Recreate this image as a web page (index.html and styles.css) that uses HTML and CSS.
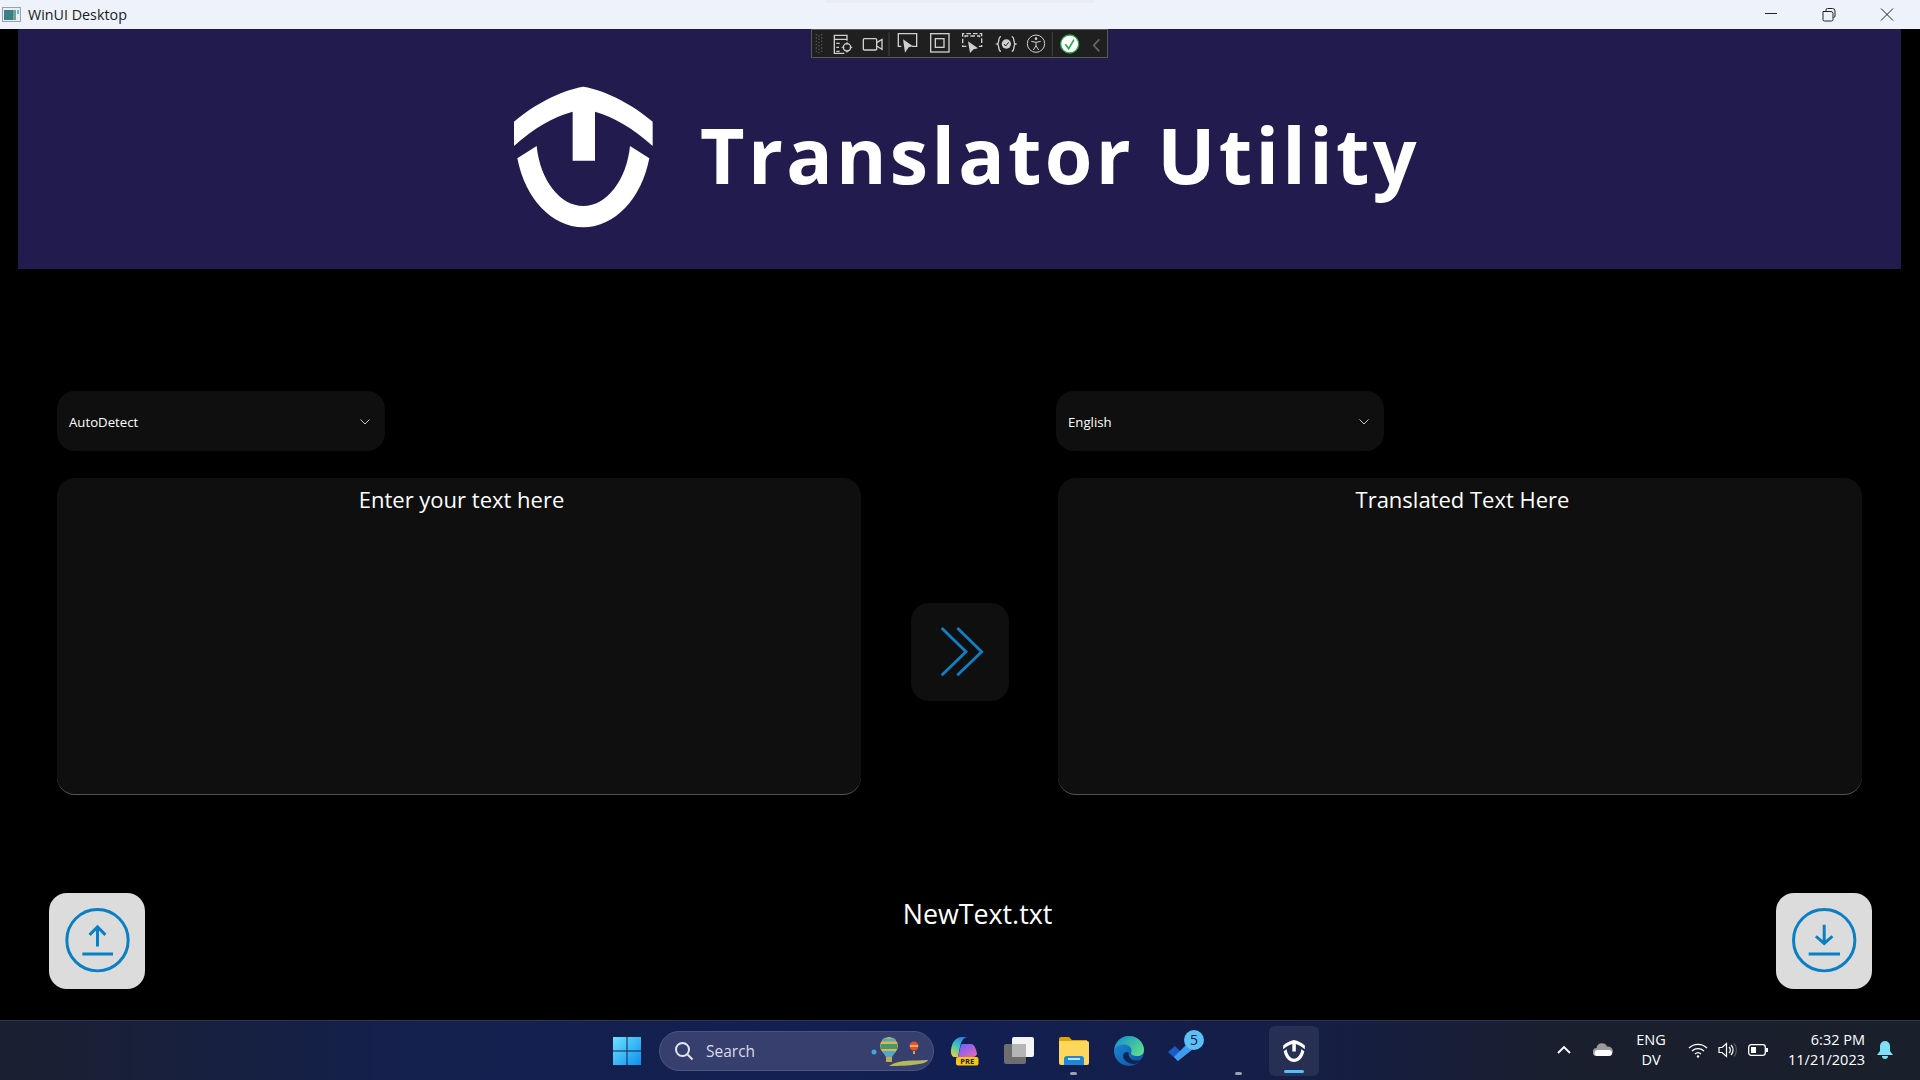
FILE: index.html
```html
<!DOCTYPE html>
<html lang="en">
<head>
  <meta charset="UTF-8">
  <title>WinUI Desktop</title>
  <link rel="stylesheet" href="styles.css">
</head>
<body>

  <div class="titlebar">
    <svg class="app-icon" width="20" height="16" viewBox="0 0 20 16">
      <rect x="0.5" y="0.5" width="18" height="14" fill="#e8eef2" stroke="#9aa0a6"/>
      <rect x="2" y="3" width="9" height="10" fill="#3d7f86"/>
      <rect x="11" y="3" width="3" height="10" fill="#6fa78c"/>
      <rect x="15" y="3" width="2" height="4" fill="#63b9d8"/>
    </svg>
    <span class="title-text">WinUI Desktop</span>
    <div class="window-buttons">
      <svg width="58" height="29" viewBox="0 0 58 29"><path d="M25 13.5h12" stroke="#222" fill="none"/></svg>
      <svg width="58" height="29" viewBox="0 0 58 29"><path d="M25 11.5h8a2 2 0 0 1 2 2v6a1.5 1.5 0 0 1-1.5 1.5h-7a1.5 1.5 0 0 1-1.5-1.5zM28 11.5v-1.5a1.5 1.5 0 0 1 1.5-1.5h5a2.5 2.5 0 0 1 2.5 2.5v5a1.5 1.5 0 0 1-1.5 1.5" stroke="#222" fill="none"/></svg>
      <svg width="58" height="29" viewBox="0 0 58 29"><path d="M25 8.5l12 12M37 8.5l-12 12" stroke="#222" fill="none"/></svg>
    </div>
  </div>
  <div class="titlebar-shadow"></div>

  <!-- debug toolbar, drawn at 3x of its size -->
  <div class="debug-bar">
    <svg width="297" height="29" viewBox="64 87 891 87" fill="none" stroke="#cfcfcf" stroke-width="4">
      <path d="M80 102v60M88 106v60M96 102v60" stroke="#555" stroke-width="4" stroke-dasharray="4 6"/>
      <path d="M172 122v-16h-38v54h30M134 118h38M140 130h10M140 142h8M140 154h10"/>
      <circle cx="172" cy="142" r="11"/>
      <path d="M172 126v8M172 150v8M156 142h8M180 142h8" stroke-width="3"/>
      <rect x="221" y="116" width="40" height="34" rx="3"/>
      <path d="M261 128l16-10v30l-16-10"/>
      <path d="M298 97v72M788 97v72" stroke="#444" stroke-width="3"/>
      <path d="M335 139h-9v-38h55v38h-14"/>
      <path d="M340 118l30 21-13 3-11 16z" fill="#cfcfcf" stroke="none"/>
      <rect x="423" y="101" width="55" height="55"/>
      <rect x="437" y="116" width="26" height="26"/>
      <path d="M530 139h-11v-38h57v38h-8M526 112v-4h44v4" stroke-dasharray="14 6"/>
      <path d="M535 124l30 21-13 3-11 11z" fill="#cfcfcf" stroke="none"/>
      <path d="M634 110c-10 0-4 20-11 22 7 2 1 22 11 22M666 110c10 0 4 20 11 22-7 2-1 22-11 22"/>
      <circle cx="650" cy="132" r="14" fill="#cfcfcf" stroke="none"/>
      <path d="M643 132l5 6 9-11" stroke="#1f1f1f" stroke-width="3"/>
      <circle cx="739" cy="131" r="26" stroke-width="3"/>
      <circle cx="739" cy="116" r="4" fill="#cfcfcf" stroke="none"/>
      <path d="M725 124l14 3 14-3M739 127v10l-8 13M739 137l8 13" stroke-width="3"/>
      <circle cx="840" cy="132" r="27" fill="#fff" stroke="#2aa84a" stroke-width="4"/>
      <path d="M827 133l10 13 16-27" stroke="#2aa84a" stroke-width="5"/>
      <path d="M929 118l-17 18 17 18" stroke="#666" stroke-width="5"/>
    </svg>
  </div>

  <main class="content">
    <header class="banner">
      <svg class="logo" width="190" height="170" viewBox="0 0 570 510">
        <path fill="#fff" d="M72 155C130 105 210 62 280 50C350 62 430 105 488 155V228C430 175 370 140 315 125V272H248V125C190 140 130 175 72 228Z"/>
        <path fill="#fff" d="M82 265L140 228C150 330 210 408 280 408C350 408 410 330 420 228L478 265C455 385 375 472 280 472C185 472 105 385 82 265Z"/>
      </svg>
      <span class="banner-title">Translator Utility</span>
    </header>

    <section class="translate-grid">
      <div class="dropdown">
        <span>AutoDetect</span>
        <svg width="10" height="6" viewBox="0 0 10 6"><path d="M0.5 0.5L5 5L9.5 0.5" stroke="#c8c8c8" fill="none"/></svg>
      </div>
      <div></div>
      <div class="dropdown dropdown-right">
        <span>English</span>
        <svg width="10" height="6" viewBox="0 0 10 6"><path d="M0.5 0.5L5 5L9.5 0.5" stroke="#c8c8c8" fill="none"/></svg>
      </div>

      <div class="text-box">Enter your text here</div>
      <button class="icon-btn go-btn" type="button">
        <svg width="98" height="98" viewBox="0 0 98 98" fill="none" stroke="#0f7fc6" stroke-width="2.8">
          <path d="M30.7 25L55 48.7L30.7 72.3M46.3 25L70.7 48.7L46.3 72.3"/>
        </svg>
      </button>
      <div class="text-box">Translated Text Here</div>
    </section>

    <footer class="file-row">
      <button class="icon-btn file-btn" type="button">
        <svg width="96" height="96" viewBox="0 0 97 97" fill="none" stroke="#0a7fc4" stroke-width="3">
          <circle cx="49" cy="47.7" r="31"/>
          <path d="M49 54V34.3M41 42.3L49 34.3L57 42.3M33.7 61.7H64.7"/>
        </svg>
      </button>
      <div class="file-name">NewText.txt</div>
      <button class="icon-btn file-btn" type="button">
        <svg width="96" height="96" viewBox="0 0 97 97" fill="none" stroke="#0a7fc4" stroke-width="3">
          <circle cx="48.7" cy="47.7" r="31"/>
          <path d="M48.7 32V51M40.3 43.7L48.7 51L57 43.7M33 61.7H64.7"/>
        </svg>
      </button>
    </footer>
  </main>

  <div class="taskbar">
    <div class="task-cell">
      <svg width="30" height="30" viewBox="0 0 30 30">
        <defs><linearGradient id="winGrad" x1="0" y1="0" x2="1" y2="1"><stop offset="0" stop-color="#6fe3fb"/><stop offset="1" stop-color="#0a8fef"/></linearGradient></defs>
        <path fill="url(#winGrad)" d="M1 1h13.5v13.5H1zM15.5 1H29v13.5H15.5zM1 15.5h13.5V29H1zM15.5 15.5H29V29H15.5z"/>
      </svg>
    </div>

    <div class="search-pill">
      <svg width="20" height="20" viewBox="0 0 20 20" fill="none" stroke="#e4e6f0" stroke-width="2">
        <circle cx="8.5" cy="8.5" r="6.5"/>
        <path d="M13.5 13.5L18.5 18.5"/>
      </svg>
      <span>Search</span>
      <svg class="search-art" width="58" height="32" viewBox="0 0 58 32">
        <path d="M18 31C28 24 44 26 57 25C56 29 40 31 18 31Z" fill="#b5b95a"/>
        <circle cx="18" cy="11" r="9" fill="#e5b53d"/>
        <path d="M9.5 9h17v5h-17z" fill="#3f9a78"/>
        <path d="M12 3.5h12l1 3h-14z" fill="#4fa9c8"/>
        <path d="M11 16h14l-4 6h-6z" fill="#4fa9c8"/>
        <rect x="15" y="22" width="6" height="5" fill="#c9a55a"/>
        <circle cx="43" cy="11" r="4.5" fill="#e0513a"/>
        <path d="M39 10h8v2h-8z" fill="#e5b53d"/>
        <rect x="42" y="16" width="2" height="3" fill="#c9a55a"/>
        <circle cx="3" cy="17" r="2.5" fill="#4aa3d8"/>
      </svg>
    </div>

    <div class="task-cell">
      <svg width="30" height="30" viewBox="0 0 30 30">
        <defs>
          <linearGradient id="copLeft" x1="0.7" y1="0" x2="0.2" y2="1"><stop offset="0" stop-color="#2f7fe8"/><stop offset="0.5" stop-color="#3fc6b8"/><stop offset="1" stop-color="#e8d23f"/></linearGradient>
          <linearGradient id="copRight" x1="0" y1="0" x2="1" y2="1"><stop offset="0" stop-color="#5a6cf0"/><stop offset="0.5" stop-color="#a860e0"/><stop offset="1" stop-color="#f06ab0"/></linearGradient>
        </defs>
        <path fill="url(#copLeft)" d="M2 14C3 6 7 1 13 1H18C14 2 12 6 11 11L9 21H5C3 21 1.5 17 2 14Z"/>
        <path fill="url(#copRight)" d="M13 8H22C25 8 27 12 28 18C27 20 26 21 24 21H9L11 13C11.5 10 12 8 13 8Z"/>
        <rect x="7" y="21" width="22.5" height="8.5" rx="2" fill="#f5c518"/>
        <text x="18.2" y="28" class="pre-text">PRE</text>
      </svg>
    </div>

    <div class="task-cell">
      <svg width="32" height="30" viewBox="0 0 32 30">
        <rect x="1" y="8" width="22" height="20" rx="2" fill="#6e6e6e"/>
        <rect x="9" y="1" width="22" height="20" rx="2" fill="#f4f4f4"/>
        <rect x="9" y="8" width="14" height="13" fill="#b5b5b5"/>
      </svg>
    </div>

    <div class="task-cell with-dot">
      <svg width="30" height="28" viewBox="0 0 30 28">
        <path d="M0 2a2 2 0 0 1 2-2h8l3 3h15v6H0z" fill="#e0a300"/>
        <path d="M0 4h28a2 2 0 0 1 2 2v20a2 2 0 0 1-2 2H2a2 2 0 0 1-2-2z" fill="#ffd65c"/>
        <path d="M5 28v-6a3 3 0 0 1 3-3h14a3 3 0 0 1 3 3v6z" fill="#1f87d6"/>
        <path d="M9 22h12" stroke="#bfe3ff" stroke-width="2"/>
      </svg>
    </div>

    <div class="task-cell">
      <svg width="30" height="30" viewBox="0 0 30 30">
        <defs>
          <linearGradient id="edgeTop" x1="0" y1="0" x2="1" y2="0.8"><stop offset="0" stop-color="#0e8bd0"/><stop offset="1" stop-color="#5fe08a"/></linearGradient>
          <linearGradient id="edgeLow" x1="0" y1="0" x2="1" y2="1"><stop offset="0" stop-color="#1c8fd8"/><stop offset="1" stop-color="#0d4ea0"/></linearGradient>
        </defs>
        <circle cx="15" cy="15" r="15" fill="url(#edgeLow)"/>
        <path d="M0.5 13C2 5 8 0 15 0c8 0 15 6 15 14 0 4-3 6-7 6-3 0-6-1-6-3 1-2 1-5-2-7-5-3-12-1-14.5 3z" fill="url(#edgeTop)"/>
        <path d="M13 16c-3 0-5 3-3 7 2 3 6 5 11 5 3-1 5-2 7-5-3 2-8 2-11 0-2-2-3-4-2-6z" fill="#12254f"/>
      </svg>
    </div>

    <div class="task-cell">
      <svg class="todo-icon" width="36" height="36" viewBox="0 0 36 36">
        <path d="M0 22l7-6 9 9-6 6z" fill="#1c5bc4"/>
        <path d="M10 31l-4-4L24 9l6 6z" fill="#3f9bef"/>
        <circle cx="26" cy="10" r="10" fill="#5cc0f5"/>
        <text x="26" y="15" class="badge-text">5</text>
      </svg>
    </div>

    <div class="task-cell with-dot"></div>

    <div class="task-cell">
      <div class="active-app">
        <svg width="24" height="22" viewBox="72 50 416 422">
          <path fill="#fff" d="M72 155C130 105 210 62 280 50C350 62 430 105 488 155V228C430 175 370 140 315 125V272H248V125C190 140 130 175 72 228Z"/>
          <path fill="#fff" d="M82 265L140 228C150 330 210 408 280 408C350 408 410 330 420 228L478 265C455 385 375 472 280 472C185 472 105 385 82 265Z"/>
        </svg>
        <span class="active-line"></span>
      </div>
    </div>

    <div class="tray">
      <svg class="tray-chevron" width="14" height="9" viewBox="0 0 14 9"><path d="M1 8L7 2L13 8" stroke="#fff" stroke-width="1.8" fill="none"/></svg>
      <svg class="tray-cloud" width="20" height="13" viewBox="0 0 20 13">
        <path d="M4 13a4 4 0 0 1-.5-8A5.5 5.5 0 0 1 14 3.5a4.5 4.5 0 0 1 2 9.500z" fill="#9a9a9a"/>
        <path d="M4 13a3 3 0 0 1 1-6h11a3 3 0 0 1 0 6z" fill="#fff"/>
      </svg>
      <div class="lang">ENG<br>DV</div>
      <svg class="tray-wifi" width="20" height="16" viewBox="0 0 20 16" fill="none" stroke="#fff" stroke-width="1.3">
        <path d="M1 6a13 13 0 0 1 18 0M4 9a9 9 0 0 1 12 0M7 12a4.5 4.5 0 0 1 6 0"/>
        <circle cx="10" cy="14.5" r="1.2" fill="#fff" stroke="none"/>
      </svg>
      <svg class="tray-sound" width="20" height="16" viewBox="0 0 20 16" fill="none" stroke="#fff" stroke-width="1.2">
        <path d="M1 5.5h3L8.5 1.5v13L4 10.5H1z"/>
        <path d="M11 5a4 4 0 0 1 0 6M13 3a7 7 0 0 1 0 10"/>
        <path d="M16 1.5a10 10 0 0 1 0 13" stroke="#555"/>
      </svg>
      <svg class="tray-battery" width="20" height="12" viewBox="0 0 20 12">
        <rect x="0.7" y="0.7" width="16.6" height="10.6" rx="2.5" fill="none" stroke="#fff" stroke-width="1.3"/>
        <rect x="3" y="3" width="5" height="6" fill="#fff"/>
        <rect x="18" y="4" width="2" height="4" fill="#fff"/>
      </svg>
      <div class="clock">6:32 PM<br>11/21/2023</div>
      <svg class="tray-bell" width="16" height="18" viewBox="0 0 16 18">
        <path d="M8 0a5 5 0 0 1 5 5v5l3 4H0l3-4V5a5 5 0 0 1 5-5z" fill="#7ee0f7"/>
        <path d="M5 15h6a3 3 0 0 1-6 0z" fill="#7ee0f7"/>
      </svg>
    </div>
  </div>

</body>
</html>
```

FILE: styles.css
```css
body {
  margin: 0;
  width: 1920px;
  height: 1080px;
  overflow: hidden;
  display: flex;
  flex-direction: column;
  position: relative;
  background-color: #000;
  font-family: "Open Sans", "Noto Sans", sans-serif;
  color: #fff;
}

/* title bar */
.titlebar {
  height: 29px;
  flex-shrink: 0;
  display: flex;
  align-items: center;
  background-color: #eef2fb;
  color: #1a1a1a;
}

.app-icon {
  margin-left: 2px;
}

.title-text {
  margin-left: 6px;
  font-size: 14.3px;
}

.window-buttons {
  margin-left: auto;
  margin-right: 6px;
  display: flex;
}

.titlebar-shadow {
  position: absolute;
  left: 825px;
  top: 0;
  width: 270px;
  height: 3px;
  background-color: #e9ecf5;
  border-radius: 0 0 12px 12px;
}

.debug-bar {
  position: absolute;
  left: 811px;
  top: 29px;
  width: 297px;
  height: 29px;
  background-color: #1f1f1f;
  box-shadow: inset 0 0 0 1px #5a5a5a;
}

/* main area */
.content {
  flex: 1;
  display: flex;
  flex-direction: column;
}

.banner {
  height: 240px;
  margin: 0 19px 0 18px;
  padding-left: 472px;
  display: flex;
  align-items: center;
  background-color: #221c4e;
}

.logo {
  margin-top: 11px;
}

.banner-title {
  margin-top: 10px;
  margin-left: 20px;
  font-size: 77px;
  font-weight: 700;
  letter-spacing: 3.3px;
  filter: blur(0.6px);
  white-space: nowrap;
}

.translate-grid {
  margin-top: 122px;
  padding-left: 57px;
  display: grid;
  grid-template-columns: 804px 197px 804px;
  grid-template-rows: 60px 317px;
  row-gap: 27px;
}

.dropdown {
  width: 328px;
  padding: 1px 15px 0 12px;
  box-sizing: border-box;
  display: flex;
  align-items: center;
  justify-content: space-between;
  background-color: #0f0f0f;
  border-radius: 18px;
  font-size: 13.2px;
}

.dropdown-right {
  margin-left: -2px;
}

.text-box {
  padding: 6px 0 0 5px;
  box-sizing: border-box;
  background-color: #0f0f0f;
  border-radius: 18px;
  border-bottom: 1px solid #555;
  text-align: center;
  font-size: 22px;
}

.icon-btn {
  padding: 0;
  border: 0;
  display: block;
}

.icon-btn svg {
  display: block;
}

.go-btn {
  width: 98px;
  height: 98px;
  margin: 125px 0 0 50px;
  background-color: #0f0f0f;
  border-radius: 18px;
}

.file-row {
  margin-top: 98px;
  padding: 0 48px 0 49px;
  display: flex;
}

.file-btn {
  width: 96px;
  height: 96px;
  background-color: #dcdcdc;
  border-radius: 18px;
}

.file-name {
  flex: 1;
  padding-left: 34px;
  text-align: center;
  font-size: 26.8px;
  line-height: 41px;
}

/* taskbar */
.taskbar {
  height: 60px;
  flex-shrink: 0;
  box-sizing: border-box;
  padding-left: 599px;
  display: flex;
  align-items: center;
  border-top: 1px solid #2e3350;
  background: linear-gradient(to right, #1a2030 0, #14204e 22%, #121f52 50%, #151e45 68%, #1a1f2d 82%, #1a1f2c 100%);
}

.task-cell {
  width: 55px;
  height: 59px;
  flex-shrink: 0;
  display: flex;
  align-items: center;
  justify-content: center;
  position: relative;
}

.with-dot::after {
  content: "";
  position: absolute;
  left: 24px;
  bottom: 5px;
  width: 7px;
  height: 3px;
  background-color: #9aa0ad;
  border-radius: 2px;
}

.search-pill {
  width: 275px;
  height: 40px;
  flex-shrink: 0;
  box-sizing: border-box;
  margin: 0 2px 0 5px;
  padding-left: 14px;
  display: flex;
  align-items: center;
  background-color: #373f6e;
  border: 1px solid #4c5482;
  border-radius: 20px;
  font-size: 15.5px;
  color: #d8dbe8;
}

.search-pill span {
  margin-left: 12px;
}

.search-art {
  margin-left: auto;
  margin-right: 4px;
}

.pre-text {
  font-size: 7.5px;
  font-weight: 700;
  fill: #222;
  text-anchor: middle;
}

.badge-text {
  font-size: 14px;
  fill: #10203a;
  text-anchor: middle;
}

.todo-icon {
  margin-top: -6px;
  margin-left: 4px;
}

.active-app {
  width: 50px;
  height: 50px;
  display: flex;
  align-items: center;
  justify-content: center;
  position: relative;
  background-color: rgba(255, 255, 255, 0.08);
  border-radius: 6px;
}

.active-line {
  position: absolute;
  left: 15px;
  bottom: 3px;
  width: 20px;
  height: 3px;
  background-color: #4cc2ff;
  border-radius: 2px;
}

.tray {
  margin-left: auto;
  margin-top: -2px;
  padding-right: 27px;
  display: flex;
  align-items: center;
  font-size: 14.5px;
  line-height: 20px;
}

.tray-chevron {
  margin-right: 22px;
}

.tray-cloud {
  margin-right: 22px;
}

.lang {
  width: 32px;
  text-align: center;
  margin-right: 21px;
}

.tray-sound {
  margin-left: 10px;
}

.tray-battery {
  margin-left: 10px;
}

.clock {
  margin-left: 20px;
  text-align: right;
}

.tray-bell {
  margin-left: 12px;
}
```
